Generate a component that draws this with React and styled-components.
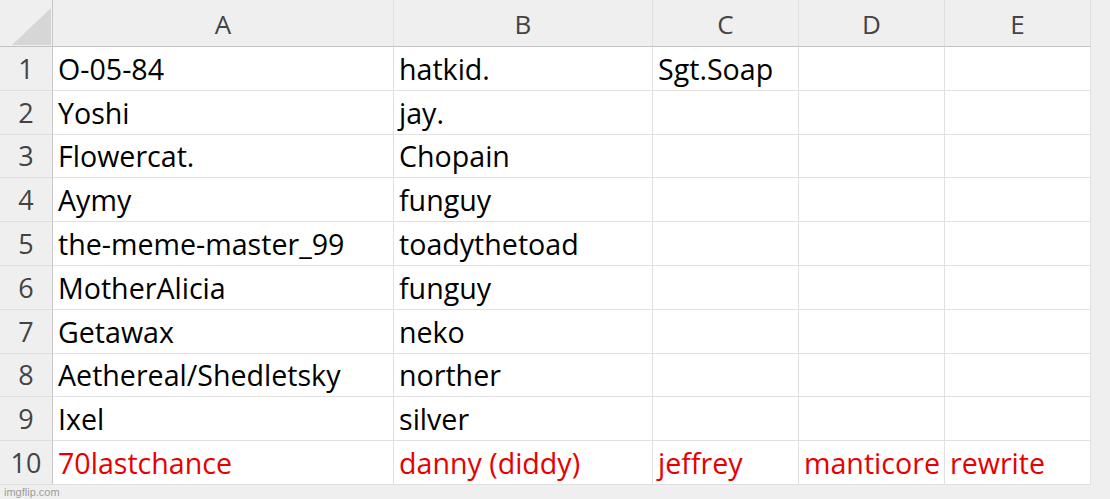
import styled, { createGlobalStyle } from 'styled-components';

const GlobalStyle = createGlobalStyle`
  html, body {
    margin: 0;
    padding: 0;
    background: #efefef;
  }
  body {
    font-family: "Open Sans", "Noto Sans", sans-serif;
  }
`;

const columns = ['A', 'B', 'C', 'D', 'E'];
const colWidths = [341, 259, 146, 146, 146];

const rows = [
  ['O-05-84', 'hatkid.', 'Sgt.Soap', '', ''],
  ['Yoshi', 'jay.', '', '', ''],
  ['Flowercat.', 'Chopain', '', '', ''],
  ['Aymy', 'funguy', '', '', ''],
  ['the-meme-master_99', 'toadythetoad', '', '', ''],
  ['MotherAlicia', 'funguy', '', '', ''],
  ['Getawax', 'neko', '', '', ''],
  ['Aethereal/Shedletsky', 'norther', '', '', ''],
  ['Ixel', 'silver', '', '', ''],
  ['70lastchance', 'danny (diddy)', 'jeffrey', 'manticore', 'rewrite'],
];

export default function App() {
  return (
    <Page>
      <GlobalStyle />
      <Sheet>
        <Corner>
          <svg width="53" height="47" viewBox="0 0 53 47">
            <polygon points="12,45 51,45 51,8" fill="#d6d6d6" />
          </svg>
        </Corner>
        {columns.map((c) => (
          <ColHeader key={c}>{c}</ColHeader>
        ))}
        <Gutter />
        {rows.map((row, i) => (
          <Row key={i} row={row} index={i} last={i === rows.length - 1} />
        ))}
      </Sheet>
      <Footer>imgflip.com</Footer>
    </Page>
  );
}

function Row({ row, index, last }) {
  return (
    <>
      <RowHeader>{index + 1}</RowHeader>
      {row.map((v, j) => (
        <Cell key={j} $red={last}>{v}</Cell>
      ))}
      <Gutter />
    </>
  );
}

const Page = styled.div`
  width: 1110px;
  height: 499px;
  background: #efefef;
  overflow: hidden;
`;

const Sheet = styled.div`
  display: grid;
  grid-template-columns: 53px ${colWidths.map((w) => w + 'px').join(' ')} 19px;
  grid-template-rows: 47px repeat(10, 43.8px);
`;

const Corner = styled.div`
  background: #efefef;
  border-right: 1px solid #c8c8c8;
  border-bottom: 1px solid #c2c2c2;
  box-sizing: border-box;
  svg { display: block; }
`;

const ColHeader = styled.div`
  display: flex;
  align-items: center;
  justify-content: center;
  background: #efefef;
  border-right: 1px solid #dedede;
  border-bottom: 1px solid #c2c2c2;
  box-sizing: border-box;
  font-size: 26px;
  color: #444;
  padding-top: 2px;
`;

const Gutter = styled.div`
  background: #efefef;
`;

const RowHeader = styled.div`
  display: flex;
  align-items: center;
  justify-content: center;
  background: #efefef;
  border-right: 1px solid #c8c8c8;
  border-bottom: 1px solid #dedede;
  box-sizing: border-box;
  font-size: 27px;
  color: #444;
`;

const Cell = styled.div`
  display: flex;
  align-items: center;
  background: #fff;
  border-right: 1px solid #e1e1e1;
  border-bottom: 1px solid #e1e1e1;
  box-sizing: border-box;
  padding-left: 5px;
  font-size: 28.6px;
  color: ${(p) => (p.$red ? '#e80000' : '#000')};
  white-space: nowrap;
  overflow: hidden;
`;

const Footer = styled.div`
  padding: 1px 0 0 4px;
  font-family: "Liberation Sans", sans-serif;
  font-size: 11px;
  color: #9c9c9c;
`;
